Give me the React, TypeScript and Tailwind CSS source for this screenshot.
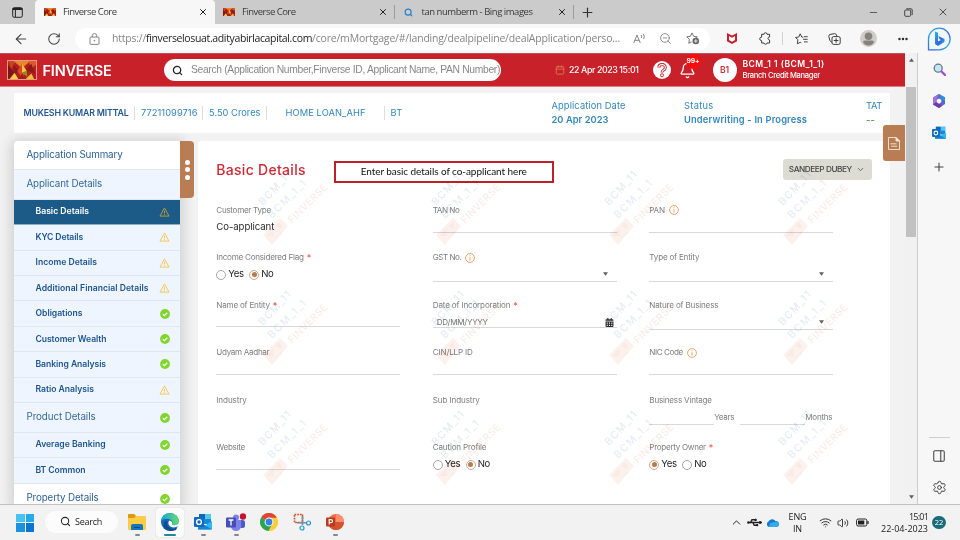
import React, { useLayoutEffect, useRef, useState } from "react";
import {
  ArrowLeft, RotateCw, X, Plus, Minus, Search, ZoomOut, Ellipsis, Calendar, Bell,
  ChevronDown, ChevronUp, Settings, PanelRight, Wifi, Volume2, Usb,
} from "lucide-react";
import { FaCalendarAlt } from "react-icons/fa";

/* One line of text whose tracking is adjusted so that it fills the given width. */
function T({ w, className = "", children }: { w: number; className?: string; children: string }) {
  const ref = useRef<HTMLSpanElement>(null);
  const [ls, setLs] = useState<number | null>(null);
  useLayoutEffect(() => {
    if (ref.current && ls === null) {
      setLs((w - ref.current.getBoundingClientRect().width) / children.length);
    }
  }, [w, children, ls]);
  return (
    <span ref={ref} className={"inline-block w-fit shrink-0 whitespace-nowrap " + className} style={ls === null ? undefined : { letterSpacing: ls + "px" }}>
      {children}
    </span>
  );
}

function Flame({ className }: { className: string }) {
  return (
    <svg viewBox="0 0 30 20" preserveAspectRatio="none" className={className}>
      <rect width="30" height="20" fill="#b3201c" />
      <path d="M0 0 8 0 4 9Z" fill="#c9451f" />
      <path d="M6 0H24L15 8Z" fill="#e8862c" />
      <path d="M22 0H30V4L25 9Z" fill="#dd5a25" />
      <path d="M0 5 7 13 0 20Z" fill="#7d1619" />
      <path d="M5 4 12 10 7 16Z" fill="#8c1a1a" />
      <path d="M19 10 25 3 29 14Z" fill="#8c1a1a" />
      <path d="M15 3 20 11 15 19 10 11Z" fill="#d9482a" />
      <path d="M15 3V13L20 11Z" fill="#f3c53a" />
      <path d="M15 13 20 11 21 18Z" fill="#8b8b25" />
      <path d="M2 20 7 13 11 20Z" fill="#f5cf45" />
      <path d="M19 20 25 14 28 20Z" fill="#f0bd35" />
      <path d="M11 20 15 14 19 20Z" fill="#a81c1c" />
    </svg>
  );
}

function Warn({ dim }: { dim?: boolean }) {
  return (
    <svg viewBox="0 0 12 11" className="h-[10px] w-[11px]" fill="none" stroke={dim ? "#b39a3e" : "#f7c75c"} strokeWidth="1.1" strokeLinejoin="round">
      <path d="M6 1 11 10H1Z" />
      <path d="M6 4V7.2M6 8V9" strokeWidth="1.2" />
    </svg>
  );
}

function Ok() {
  return (
    <svg viewBox="0 0 10 10" className="h-[10px] w-[10px]">
      <circle cx="5" cy="5" r="4.9" fill="#80d62c" />
      <path d="M2.8 5.1 4.4 6.6 7.3 3.7" fill="none" stroke="#fff" strokeWidth="1.3" />
    </svg>
  );
}

type NavItem = { t: string; w: number; h: string; s?: "warn" | "ok" | "dim"; kind: "top" | "group" | "sub" | "active" };
const nav: NavItem[] = [
  { t: "Application Summary", w: 96, h: "h-[29px]", kind: "top" },
  { t: "Applicant Details", w: 75.5, h: "h-[29.5px]", kind: "group" },
  { t: "Basic Details", w: 53.5, h: "h-[25.5px]", s: "dim", kind: "active" },
  { t: "KYC Details", w: 47.5, h: "h-[25.5px]", s: "warn", kind: "sub" },
  { t: "Income Details", w: 61.5, h: "h-[25.5px]", s: "warn", kind: "sub" },
  { t: "Additional Financial Details", w: 113, h: "h-[25.4px]", s: "warn", kind: "sub" },
  { t: "Obligations", w: 47, h: "h-[25.4px]", s: "ok", kind: "sub" },
  { t: "Customer Wealth", w: 71, h: "h-[25.4px]", s: "ok", kind: "sub" },
  { t: "Banking Analysis", w: 70.5, h: "h-[25.4px]", s: "ok", kind: "sub" },
  { t: "Ratio Analysis", w: 58.5, h: "h-[25.5px]", s: "warn", kind: "sub" },
  { t: "Product Details", w: 69, h: "h-[29.5px]", s: "ok", kind: "group" },
  { t: "Average Banking", w: 70, h: "h-[25.5px]", s: "ok", kind: "sub" },
  { t: "BT Common", w: 50, h: "h-[25.5px]", s: "ok", kind: "sub" },
  { t: "Property Details", w: 72, h: "h-[30px]", s: "ok", kind: "top" },
];
const rowTone = {
  top: "bg-white pl-[12.5px] pt-[1px] text-[9.8px] text-[#2d6198] border-[#e1e6ea]",
  group: "bg-[#eef5fe] pl-[12.5px] pt-[1px] text-[9.8px] text-[#386a9e] border-[#e1e6ea]",
  sub: "bg-[#eef5fe] pl-[21.5px] text-[8.6px] font-semibold text-[#1d5490] border-[#e1e6ea]",
  active: "bg-[#1c5a87] pl-[21.5px] text-[8.6px] font-semibold text-white border-[#8fb0c9]",
};

function Sidebar() {
  return (
    <div className="flex h-[363px] w-[166px] shrink-0 flex-col overflow-hidden rounded-tl-sm shadow-[0_2px_12px_4px_rgba(0,0,0,0.13)]">
      {nav.map((n) => (
        <div key={n.t} className={"flex shrink-0 items-center justify-between border-b pr-[10.5px] " + n.h + " " + rowTone[n.kind]}>
          <T w={n.w}>{n.t}</T>
          {n.s === "ok" && <Ok />}
          {n.s === "warn" && <Warn />}
          {n.s === "dim" && <Warn dim />}
        </div>
      ))}
    </div>
  );
}

function Radio({ on }: { on?: boolean }) {
  return (
    <span className={"flex h-[10px] w-[10px] shrink-0 items-center justify-center rounded-full border " + (on ? "border-[#d3a78b]" : "border-[#a5a5a5]")}>
      {on && <span className="h-[5px] w-[5px] rounded-full bg-[#b87a50]" />}
    </span>
  );
}

function YesNo({ yes }: { yes?: boolean }) {
  return (
    <div className="flex h-[20px] items-center text-[9.6px] text-[#252525]">
      <Radio on={yes} />
      <T w={15.5} className="ml-[2px]">Yes</T>
      <span className="w-[5.5px]" />
      <Radio on={!yes} />
      <T w={12} className="ml-[2px]">No</T>
    </div>
  );
}

function Field({ label, w, req, info, line, children }: { label: string; w: number; req?: boolean; info?: boolean; line?: string; children?: React.ReactNode }) {
  return (
    <div className="flex h-[47.5px] w-[184px] flex-col">
      <div className="flex h-[14px] shrink-0 items-center text-[8.1px] leading-none text-[#7e7e7e]">
        <T w={w}>{label}</T>
        {req && <span className="ml-[3px] text-[9px] text-[#f04438]">*</span>}
        {info && (
          <svg viewBox="0 0 10 10" className="ml-[4px] h-[10px] w-[10px]" fill="none" stroke="#ee9a5c" strokeWidth="0.9">
            <circle cx="5" cy="5" r="4.4" />
            <path d="M5 4.3V7.5M5 2.4V3.4" />
          </svg>
        )}
      </div>
      {line ? <div className={"flex shrink-0 items-center border-b border-[#d9d9d9] " + line}>{children}</div> : children}
    </div>
  );
}

const Caret = ({ className }: { className: string }) => (
  <svg viewBox="0 0 6 4" className={"h-[4px] w-[5px] " + className}><path d="M0 0H6L3 4Z" fill="#5f5f5f" /></svg>
);

function Form() {
  return (
    <div className="grid grid-cols-[184px_184px_184px] gap-x-[32.5px] pt-[22px]">
      <Field label="Customer Type" w={54.5}><T w={58} className="mt-[2.5px] text-[9.6px] text-[#2a2a2a]">Co-applicant</T></Field>
      <Field label="TAN No" w={26.5} line="h-[16px]" />
      <Field label="PAN" w={15.5} info line="h-[16px]" />

      <Field label="Income Considered Flag" w={87.5} req><YesNo /></Field>
      <Field label="GST No." w={28.5} info line="h-[17.5px]"><Caret className="ml-[170px] mt-[2px]" /></Field>
      <Field label="Type of Entity" w={50} line="h-[17.5px]"><Caret className="ml-[170px] mt-[2px]" /></Field>

      <Field label="Name of Entity" w={53.5} req line="h-[15px]" />
      <Field label="Date of Incorporation" w={77.5} req line="h-[16px]">
        <T w={51} className="ml-[4px] mt-[5px] text-[8.1px] text-[#757575]">DD/MM/YYYY</T>
        <FaCalendarAlt className="ml-auto mr-[3px] mt-[5px] h-[9px] w-[9px] text-[#2b2b2b]" />
      </Field>
      <Field label="Nature of Business" w={69} line="h-[18px]"><Caret className="ml-[170px] mt-[2px]" /></Field>

      <Field label="Udyam Aadhar" w={53} line="h-[15.5px]" />
      <Field label="CIN/LLP ID" w={40} line="h-[15.5px]" />
      <Field label="NIC Code" w={33.5} info line="h-[15.5px]" />

      <Field label="Industry" w={30.5} />
      <Field label="Sub Industry" w={47} />
      <Field label="Business Vintage" w={62.5}>
        <div className="mt-[3px] flex h-[15px] text-[8.1px] leading-[15px] text-[#7e7e7e]">
          <span className="w-[65px] border-b border-[#d9d9d9]" />
          <T w={20}>Years</T>
          <span className="ml-[6px] w-[65px] border-b border-[#d9d9d9]" />
          <T w={27}>Months</T>
        </div>
      </Field>

      <Field label="Website" w={28.5} line="h-[15px]" />
      <Field label="Caution Profile" w={53.5}><YesNo /></Field>
      <Field label="Property Owner" w={56.5} req><YesNo yes /></Field>
    </div>
  );
}

function Watermark() {
  return (
    <svg viewBox="0 0 80 80" className="h-[80px] w-[80px]" fontFamily="Inter, sans-serif">
      <g transform="rotate(-47 11 37)"><text x="11" y="37" fontSize="10.3" textLength="42" fill="#e3e9f3">BCM_11</text></g>
      <g transform="rotate(-45 20 50)"><text x="20" y="50" fontSize="10.3" textLength="49" fill="#e3e9f3">BCM_1_1</text></g>
      <g transform="rotate(-45 40 55)"><text x="40" y="55" fontSize="10" fontWeight="500" textLength="51" fill="#faeceb">FINVERSE</text></g>
      <path d="M11 66 28 49 36 57 20 76Z" fill="#fcf1ed" />
      <path d="M14 67 21 59 22 67Z M23 57 28 53 30 60Z M22 70 31 61 29 65Z" fill="#faeae5" />
    </svg>
  );
}

function BrowserTabs() {
  return (
    <div className="flex h-[24px] shrink-0 items-center bg-[#cbcbcb] font-['Open_Sans',sans-serif] text-[9.5px] text-[#3a3a3a]">
      <div className="flex w-[35px] justify-center">
        <svg viewBox="0 0 11 11" className="h-[11px] w-[11px]" fill="none" stroke="#222"><rect x=".7" y=".7" width="9.6" height="9.6" rx="1.5" /><path d="M.7 2H10.3" strokeWidth="2" /><path d="M3.4 2V10" /></svg>
      </div>
      <div className="flex h-full w-[180px] items-center rounded-t bg-[#f7f7f7] pl-[9px]">
        <Flame className="h-[8px] w-[12px]" /><T w={53.5} className="ml-[7px]">Finverse Core</T>
        <X className="ml-[81px] h-[10px] w-[10px] text-[#222]" strokeWidth={2.4} />
      </div>
      <div className="flex w-[180px] items-center border-r border-[#9b9b9b] pl-[8px]">
        <Flame className="h-[8px] w-[12px]" /><T w={53.5} className="ml-[7px]">Finverse Core</T>
        <X className="ml-[82px] h-[10px] w-[10px] text-[#222]" strokeWidth={2.4} />
      </div>
      <div className="flex w-[179px] items-center border-r border-[#9b9b9b] pl-[9px]">
        <Search className="h-[9px] w-[9px] text-[#2680cf]" strokeWidth={3} /><T w={111} className="ml-[8.5px]">tan numberm - Bing images</T>
        <X className="ml-[24px] h-[10px] w-[10px] text-[#222]" strokeWidth={2.4} />
      </div>
      <Plus className="ml-[6px] h-[15px] w-[15px] text-[#333]" strokeWidth={1.9} />
      <Minus className="ml-[273px] h-[11px] w-[11px] text-[#444]" strokeWidth={1.8} />
      <svg viewBox="0 0 9 9" className="ml-[25px] h-[9px] w-[9px]" fill="none" stroke="#444"><rect x=".7" y="2" width="6" height="6.3" rx="1" /><path d="M2.3.8H7Q8.2.8 8.2 2V7" /></svg>
      <X className="ml-[24px] h-[12px] w-[12px] text-[#444]" strokeWidth={1.8} />
    </div>
  );
}

function Toolbar() {
  return (
    <div className="flex h-[29px] shrink-0 items-center bg-[#f7f7f7] text-[#444]">
      <ArrowLeft className="ml-[13px] h-[16px] w-[16px]" strokeWidth={1.7} />
      <RotateCw className="ml-[18px] h-[14px] w-[14px]" strokeWidth={1.8} />
      <div className="ml-[14px] flex h-[22px] w-[635px] items-center rounded-full bg-white font-['Open_Sans',sans-serif] text-[10.5px] text-[#858585]">
        <svg viewBox="0 0 11 12" className="ml-[14px] h-[12px] w-[11px] shrink-0" fill="none" stroke="#777" strokeWidth=".9"><rect x="1" y="4" width="9" height="7.4" rx="1" /><path d="M3.3 4V2.5Q3.3.6 5.5.6T7.7 2.5V4" /><circle cx="5.5" cy="7.7" r=".8" fill="#777" stroke="none" /></svg>
        <T w={34} className="ml-[12px]">https://</T>
        <T w={166} className="text-[#222]">finverselosuat.adityabirlacapital.com</T>
        <T w={308}>/core/mMortgage/#/landing/dealpipeline/dealApplication/perso...</T>
        <svg viewBox="0 0 13 12" className="ml-[13px] h-[12px] w-[13px]" fill="none" stroke="#777" strokeWidth=".9"><path d="M.7 10 4 2 7.3 10M1.8 7.3H6.2M8 2Q9.3 3.2 8.4 5M10 .8Q12.4 3 10.6 6" /></svg>
        <ZoomOut className="ml-[13px] h-[13px] w-[13px]" strokeWidth={1.7} />
        <svg viewBox="0 0 14 13" className="ml-[14px] h-[13px] w-[14px]" fill="none" stroke="#666" strokeWidth=".9"><path d="M6 .9 7.6 4.3 11.2 4.8 8.6 7.2M6 .9 4.4 4.3.8 4.8 3.4 7.4 2.8 11.2 5.6 9.8" /><circle cx="9.8" cy="9" r="3.3" fill="#666" stroke="none" /><path d="M8 9H11.6M9.8 7.2V10.8" stroke="#fff" strokeWidth=".8" /></svg>
      </div>
      <svg viewBox="0 0 10 11" className="ml-[16.5px] h-[11px] w-[10px]"><path d="M0 0 5 2.4 10 0V8.2L5 11 0 8.2ZM2 3V7L5 8.7 8 7V3L5 4.7Z" fill="#c8202c" fillRule="evenodd" /></svg>
      <svg viewBox="0 0 12 13" className="ml-[22.5px] h-[13px] w-[12px]" fill="none" stroke="#3c3c3c" strokeWidth="1" strokeLinejoin="round"><path d="M2.6 2.3H5Q5 .7 6.5.7T8 2.3H10.6V5Q9 5 9 6.4T10.6 8V11H8Q8 12.2 6.5 12.2T5 11H2.6V8.6Q.7 8.6.7 6.9T2.6 5.2Z" /></svg>
      <span className="ml-[11px] h-[13px] w-px bg-[#d2d2d2]" />
      <svg viewBox="0 0 13 12" className="ml-[11.5px] h-[12px] w-[13px]" fill="none" stroke="#3c3c3c" strokeWidth=".95"><path d="M8.3 4.2 6.8 4.1 5.2.8 3.7 4 .6 4.5 2.9 6.8 2.3 10.8 5.2 9.3 6.3 9.9M9 3.7H12.7M8 6.3H12.7M9 8.9H12.7" /></svg>
      <svg viewBox="0 0 13 12" className="ml-[20px] h-[12px] w-[13px]" fill="none" stroke="#3c3c3c" strokeWidth="1"><rect x="4" y="3.6" width="8.2" height="7.8" rx="1.6" /><path d="M3.8 9Q2.2 8.6 1.9 7.5L.8 3.5Q.5 2 2 1.5L6.5.6Q8 .5 8.4 1.8L8.8 3M8.1 5.2V9.8M5.8 7.5H10.4" /></svg>
      <svg viewBox="0 0 17 17" className="ml-[19px] h-[17px] w-[17px]"><circle cx="8.5" cy="8.5" r="8.5" fill="#d0cdc9" /><circle cx="8.5" cy="6.2" r="3.8" fill="#85827e" /><path d="M3 12.3Q3 10.6 5 10.6H12Q14 10.6 14 12.3Q12 15.5 8.5 15.5T3 12.3Z" fill="#85827e" /></svg>
      <Ellipsis className="ml-[20.5px] h-[12px] w-[12px] text-[#222]" strokeWidth={2.8} />
      <svg viewBox="0 0 24 24" className="ml-[18px] h-[24px] w-[24px]">
        <defs><linearGradient id="bing" x1="0" x2="1" y1="0" y2="1"><stop offset="0" stopColor="#2db5df" /><stop offset=".6" stopColor="#3265df" /><stop offset="1" stopColor="#38c1de" /></linearGradient></defs>
        <path d="M1.5 22.8V12A10.8 10.8 0 1 1 12.3 22.8Z" fill="#eff8ff" stroke="url(#bing)" strokeWidth="1.3" />
        <path d="M8 4.5 11 5.8V14.5L14 13 12.2 11.8 11.3 9 17.5 12V15L11 19 8 17Z" fill="url(#bing)" />
      </svg>
    </div>
  );
}

function AppHeader() {
  return (
    <div className="flex h-[34px] shrink-0 items-center border-b border-t border-b-[#dd7e82] border-t-[#b9565b] bg-[#c82129] text-white">
      <Flame className="ml-[7px] h-[20px] w-[30px] shrink-0 border border-[#e29b82]" />
      <T w={69} className="ml-[5.5px] mt-[1.5px] text-[14.5px] font-semibold">FINVERSE</T>
      <div className="ml-[52.5px] flex h-[22px] w-[337px] items-center rounded-full bg-white pl-[8px] font-['Liberation_Sans',Arial,sans-serif] text-[10.3px] text-[#888]">
        <Search className="h-[11px] w-[11px] shrink-0 text-[#222]" strokeWidth={2.8} />
        <T w={309} className="ml-[8px]">Search (Application Number,Finverse ID, Applicant Name, PAN Number)</T>
      </div>
      <Calendar className="ml-[54px] h-[10px] w-[10px] text-[#db7956]" strokeWidth={2} />
      <T w={69.5} className="ml-[4px] text-[8.8px] font-medium">22 Apr 2023 15:01</T>
      <svg viewBox="0 0 18 18" className="ml-[14px] h-[18px] w-[18px] shrink-0" fill="none">
        <circle cx="9" cy="9" r="9" fill="#fff" />
        <path d="M5.8 6.6Q5.9 3.6 9.1 3.6T12.3 6.4Q12.3 8 10.7 9 9 10 9 11.5" stroke="#c82129" strokeWidth="3" />
        <path d="M5.8 6.6Q5.9 3.6 9.1 3.6T12.3 6.4Q12.3 8 10.7 9 9 10 9 11.2" stroke="#fff" strokeWidth="1.1" />
        <circle cx="9" cy="14.2" r="1.5" stroke="#c82129" strokeWidth=".9" />
      </svg>
      <div className="relative ml-[8px] mt-[1px]">
        <Bell className="h-[17px] w-[17px]" strokeWidth={1.8} />
        <span className="absolute -top-[8px] left-[7px] flex h-[15px] w-[15px] items-center justify-center rounded-full bg-[#fb0d0d] text-[6.8px] font-bold tracking-[-0.2px]">99+</span>
      </div>
      <span className="ml-[17px] flex h-[24px] w-[24px] items-center justify-center rounded-full bg-white text-[8.5px] font-semibold text-[#c8343b]">B1</span>
      <div className="ml-[6px] flex flex-col leading-[12px]">
        <T w={82} className="text-[8.5px] font-semibold">BCM_1 1 (BCM_1_1)</T>
        <T w={77.5} className="text-[7.6px] font-medium">Branch Credit Manager</T>
      </div>
    </div>
  );
}

function CustomerBar() {
  return (
    <div className="ml-[14px] flex h-[40.5px] w-[876px] shrink-0 items-center bg-white text-[9.3px] text-[#3186bd]">
      <T w={105} className="ml-[9.5px] text-[8.8px] font-semibold text-[#215893]">MUKESH KUMAR MITTAL</T>
      <span className="ml-[5.5px] h-[14px] w-px bg-[#dedede]" />
      <T w={56.5} className="ml-[6px]">77211099716</T>
      <span className="ml-[4.5px] h-[14px] w-px bg-[#dedede]" />
      <T w={51.5} className="ml-[6px]">5.50 Crores</T>
      <span className="ml-[5px] h-[14px] w-px bg-[#dedede]" />
      <T w={80} className="ml-[19px]">HOME LOAN_AHF</T>
      <span className="ml-[18px] h-[14px] w-px bg-[#dedede]" />
      <T w={12} className="ml-[6px]">BT</T>
      <div className="ml-[149px] flex w-[132.5px] shrink-0 flex-col leading-[14px]"><T w={74}>Application Date</T><T w={57} className="font-semibold">20 Apr 2023</T></div>
      <div className="flex w-[182px] shrink-0 flex-col leading-[14px]"><T w={29.5}>Status</T><T w={123} className="font-semibold">Underwriting - In Progress</T></div>
      <div className="flex flex-col leading-[14px]"><T w={16}>TAT</T><T w={9} className="font-semibold text-[#55a64f]">--</T></div>
    </div>
  );
}

function DetailsCard() {
  return (
    <div className="relative ml-[4px] h-[363px] w-[692px] shrink-0 overflow-hidden rounded-t bg-white pl-[18.3px] pt-[17px]">
      <div className="flex h-[23px] items-center">
        <T w={89.5} className="text-[14px] font-medium text-[#cf2934]">Basic Details</T>
        <div className="ml-[28px] mt-[4px] flex h-[22px] w-[220px] items-center justify-center border-2 border-[#bd2025] bg-white font-['Lato',sans-serif] text-[10px] text-[#111]">
          <T w={166}>Enter basic details of co-applicant here</T>
        </div>
        <div className="ml-[229px] flex h-[21px] w-[89px] items-center rounded-[3px] bg-[#dcdcd4] pl-[6px] text-[8.2px] font-medium text-[#444]">
          <T w={63}>SANDEEP DUBEY</T><ChevronDown className="ml-[4px] h-[9px] w-[9px]" />
        </div>
      </div>
      <Form />
      <div className="pointer-events-none absolute left-[54px] top-[28px] grid grid-cols-[repeat(4,173.2px)] grid-rows-[repeat(3,120px)] mix-blend-multiply">
        {Array.from({ length: 12 }, (_, i) => <Watermark key={i} />)}
      </div>
    </div>
  );
}

function EdgeRail() {
  return (
    <div className="flex w-[43px] shrink-0 flex-col items-center border-l border-[#cdcdcd] bg-[#f7f7f7] pt-[10px] text-[#444]">
      <svg viewBox="0 0 13 13" className="h-[13px] w-[13px] shrink-0"><path d="M8.5 8.5 12 12" stroke="#a54ae0" strokeWidth="2.4" strokeLinecap="round" /><circle cx="5.2" cy="5.2" r="4" fill="#c4e6f5" stroke="#667785" strokeWidth="1.3" /></svg>
      <svg viewBox="0 0 14 14" className="mt-[18px] h-[14px] w-[14px] shrink-0"><path d="M7 0 13 3.5V10L7 14 1 10.5V3.5Z" fill="#5c63d5" /><path d="M7 0 1 3.5V10.5L4.5 8V5Z" fill="#a56fdc" /><path d="M7 0 13 3.5V8L9 5Z" fill="#2f8fd5" /><path d="M1 10.5 7 14 10 11.8 4.5 8Z" fill="#7439a7" /><path d="M7 4.4 9.3 5.7V8.3L7 9.7 4.7 8.3V5.7Z" fill="#f7f7f7" /></svg>
      <Outlook className="mt-[18px] h-[14px] w-[14px] shrink-0" />
      <Plus className="mt-[20px] h-[14px] w-[14px] shrink-0" strokeWidth={1.8} />
      <span className="mt-[263px] h-px w-[21px] shrink-0 bg-[#cfcfcf]" />
      <PanelRight className="mt-[11px] h-[14px] w-[14px] shrink-0" strokeWidth={1.8} />
      <Settings className="mt-[17px] h-[15px] w-[15px] shrink-0" strokeWidth={1.6} />
    </div>
  );
}

function Outlook({ className }: { className: string }) {
  return (
    <svg viewBox="0 0 18 18" className={className}>
      <rect x="5" y="1" width="12" height="10" fill="#1a88d8" /><rect x="11" y="1" width="6" height="5" fill="#4fc9f5" /><rect x="5" y="1" width="6" height="5" fill="#0f67b5" />
      <path d="M4 8 11 12.5 18 8V16.5H4Z" fill="#35b5ee" /><path d="M4 8 18 16.5H4Z" fill="#1683d4" />
      <rect x="0" y="4" width="10" height="10" rx="1" fill="#0f6cbd" /><circle cx="5" cy="9" r="2.4" fill="none" stroke="#fff" strokeWidth="1.4" />
    </svg>
  );
}

function TaskApp({ dot, wide, active, children }: { dot?: boolean; wide?: boolean; active?: boolean; children: React.ReactNode }) {
  return (
    <div className={"flex h-[29px] w-[28px] flex-col items-center rounded-[3px] pt-[5px] " + (active ? "bg-[#fbfbfb] shadow-[0_0_1px_#bbb]" : "")}>
      {children}
      {(dot || wide) && <span className={"mt-[3px] h-[2px] rounded-full " + (wide ? "w-[12px] bg-[#26869a]" : "w-[5px] bg-[#878787]")} />}
    </div>
  );
}

function Taskbar() {
  return (
    <div className="flex h-[36px] shrink-0 items-center border-t border-[#c2c2c2] bg-[#f2f2f2] font-['Open_Sans',sans-serif] text-[#222]">
      <div className="ml-[16px] grid h-[18px] w-[18px] grid-cols-2 gap-px"><i className="bg-[#48c3ef]" /><i className="bg-[#24a9e9]" /><i className="bg-[#1993df]" /><i className="bg-[#0876d0]" /></div>
      <div className="-mt-[2px] ml-[11px] flex h-[22px] w-[73px] items-center rounded-full bg-[#fcfcfc] pl-[15px] text-[9px]"><Search className="h-[11px] w-[11px]" strokeWidth={2.2} /><T w={27} className="ml-[4px]">Search</T></div>
      <div className="-mt-px ml-[5px] flex items-center gap-[5px]">
        <TaskApp dot><svg viewBox="0 0 18 18" className="h-[18px] w-[18px]"><path d="M0 2Q0 1 1 1H6L8 3H17Q18 3 18 4V16Q18 17 17 17H1Q0 17 0 16Z" fill="#ffcc44" /><path d="M0 2Q0 1 1 1H6L8 3 6 5H0Z" fill="#d99b16" /><path d="M3 17V13Q3 11 5 11H13Q15 11 15 13V17Z" fill="#1377bf" /><path d="M6 14.5H12" stroke="#0b4a7c" /></svg></TaskApp>
        <TaskApp wide active><svg viewBox="0 0 18 18" className="h-[18px] w-[18px]"><defs><linearGradient id="edge" x1="0" x2="1"><stop offset="0" stopColor="#199fe0" /><stop offset="1" stopColor="#65de6a" /></linearGradient></defs><circle cx="9" cy="9" r="9" fill="#1269b5" /><path d="M0 8Q1 0 9 0Q17 .5 18 7.5Q18 12 13 12.5Q10.8 12.3 10.8 11.2Q12.4 9 10 7Q5 4 0 8Z" fill="url(#edge)" /><path d="M6.5 8Q4.6 13.5 10 15.5Q14 17 16.6 13.7L15 17Q12 18 10 18Q1 17 3 10Q4 7.5 6.5 8Z" fill="#11498d" /><path d="M8.3 7.6Q6.6 9 7.8 12Q10.5 16.3 16.7 13.2L18 12.5V9Q17 12.6 12.6 12.3 10.8 12 11 11.2Q12 8.5 8.3 7.6Z" fill="#fbfbfb" /></svg></TaskApp>
        <TaskApp dot><Outlook className="h-[18px] w-[18px]" /></TaskApp>
        <TaskApp dot><svg viewBox="0 0 20 18" className="h-[18px] w-[20px]"><circle cx="10" cy="4.5" r="3" fill="#7b83eb" /><rect x="13" y="7" width="6" height="8" rx="2.5" fill="#5059c9" /><path d="M5 7H15V14Q14 18 10 18T5 14Z" fill="#7b83eb" /><rect x="0" y="4.5" width="10" height="10" rx="1" fill="#4650b4" /><path d="M2.6 7H7.4M5 7V12.4" stroke="#fff" strokeWidth="1.3" /><circle cx="17" cy="3.5" r="3.2" fill="#c4122f" /></svg></TaskApp>
        <TaskApp><svg viewBox="0 0 18 18" className="h-[18px] w-[18px]"><circle cx="9" cy="9" r="9" fill="#ffcd35" /><path d="M9 9 1.2 4.5A9 9 0 0 1 16.8 4.5Z" fill="#df4437" /><path d="M1.2 4.5A9 9 0 0 0 8.5 18L12.5 11 9 9Z" fill="#27a653" /><path d="M9 4.7H16.9A9 9 0 0 1 8.8 18L13 10Z" fill="#ffcd35" /><circle cx="9" cy="9" r="4.4" fill="#fff" /><circle cx="9" cy="9" r="3.4" fill="#397fe8" /></svg></TaskApp>
        <TaskApp><svg viewBox="0 0 18 18" className="h-[18px] w-[18px]" fill="none"><rect x="1.5" y="1.5" width="8" height="8" stroke="#d94e27" strokeWidth="1.6" strokeDasharray="1.7 1" /><path d="M9.5 3V12M4 9.8H14" stroke="#808b94" strokeWidth="1.6" /><circle cx="9" cy="15" r="2" stroke="#219bd4" strokeWidth="1.2" /><circle cx="15.5" cy="10" r="2" stroke="#219bd4" strokeWidth="1.2" /></svg></TaskApp>
        <TaskApp dot><svg viewBox="0 0 18 18" className="h-[18px] w-[18px]"><circle cx="10" cy="9" r="8" fill="#ed6c47" /><path d="M10 1A8 8 0 0 1 18 9H10Z" fill="#ff8f6b" /><path d="M2 9H18A8 8 0 0 1 2 9Z" fill="#d35230" /><rect x="0" y="4.5" width="9" height="9" rx="1" fill="#bd381c" /><path d="M3.2 11.5V6.7H5A1.5 1.5 0 0 1 5 9.7H3.2" fill="none" stroke="#fff" strokeWidth="1.2" /></svg></TaskApp>
      </div>
      <ChevronUp className="ml-auto h-[13px] w-[13px]" strokeWidth={1.8} />
      <Usb className="ml-[5px] h-[13px] w-[13px] rotate-45" strokeWidth={2.6} />
      <svg viewBox="0 0 13 9" className="ml-[5px] h-[9px] w-[13px]"><path d="M3 9A3 3 0 0 1 2.5 3.5 4 4 0 0 1 9.5 3 3 3 0 0 1 10.5 9Z" fill="#147bd1" /><path d="M4 5 10 3.8Q13 4.2 13 6.5 12.5 9 10 9H3Z" fill="#38a9ea" /></svg>
      <div className="ml-[9px] flex w-[19px] flex-col items-center text-[9px] leading-[11.5px]"><T w={18}>ENG</T><T w={9}>IN</T></div>
      <Wifi className="ml-[12px] h-[13px] w-[13px]" strokeWidth={1.7} />
      <Volume2 className="ml-[5px] h-[12px] w-[12px]" strokeWidth={1.7} />
      <svg viewBox="0 0 13 9" className="ml-[7px] h-[9px] w-[13px]"><rect x=".6" y="1" width="10.2" height="7" rx="1.5" fill="none" stroke="#222" /><rect x="2" y="2.5" width="6.3" height="4" fill="#222" /><path d="M12 3V6" stroke="#222" strokeWidth="1.2" /></svg>
      <div className="ml-[12px] flex w-[47px] flex-col items-end text-[9px] leading-[12px]"><T w={19}>15:01</T><T w={47}>22-04-2023</T></div>
      <span className="ml-[4px] mr-[14px] flex h-[13px] w-[14px] items-center justify-center rounded-full bg-[#1b6b79] text-[7.5px] text-white">22</span>
    </div>
  );
}

export default function App() {
  return (
    <div className="flex h-[540px] w-[960px] flex-col overflow-hidden bg-[#f2f2f2] font-['Inter',sans-serif]">
      <BrowserTabs />
      <Toolbar />
      <div className="flex h-[451px] shrink-0">
        <div className="relative flex w-[905px] shrink-0 flex-col overflow-hidden bg-[#f2f2f2]">
          <AppHeader />
          <div className="h-[5.5px] shrink-0" />
          <CustomerBar />
          <div className="mt-[8px] flex pl-[14px]">
            <Sidebar />
            <div className="flex h-[57px] w-[14px] shrink-0 flex-col items-center justify-center gap-[2.5px] rounded-r-[4px] bg-[#b97d54]">
              <i className="h-[5px] w-[5px] rounded-full bg-white" /><i className="h-[5px] w-[5px] rounded-full bg-white" /><i className="h-[5px] w-[5px] rounded-full bg-white" />
            </div>
            <DetailsCard />
          </div>
          <div className="absolute right-0 top-[72px] flex h-[36px] w-[22px] items-center justify-center rounded-l-[3px] bg-[#b97d54]">
            <svg viewBox="0 0 12 13" className="h-[13px] w-[12px]" fill="none" stroke="#f6e8de" strokeWidth=".9" strokeLinejoin="round"><path d="M.5.5H8L11.5 4V12.5H.5Z" /><path d="M8 .5V4H11.5Z" fill="#f6e8de" /><path d="M2.5 6.8H8.5M3.2 9.2H9.2" /></svg>
          </div>
        </div>
        <div className="flex w-[12px] shrink-0 flex-col items-center bg-[#f1f1f1] pt-[5px]">
          <Caret className="rotate-180" />
          <span className="mt-[25px] h-[150px] w-[10px] bg-[#c1c1c1]" />
          <Caret className="mt-[258px]" />
        </div>
        <EdgeRail />
      </div>
      <Taskbar />
    </div>
  );
}
